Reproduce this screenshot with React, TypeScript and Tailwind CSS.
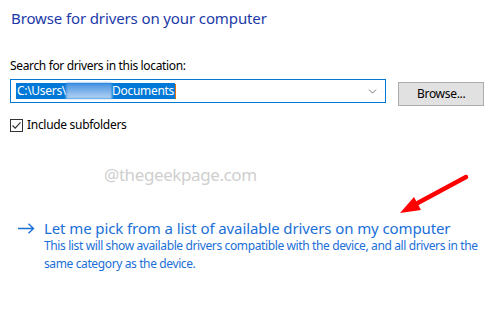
import { ChevronDown } from "lucide-react";

const FONT = "font-['Noto_Sans','Open_Sans',sans-serif]";

function RedArrow() {
  // hand-drawn style annotation pointing at the link
  return (
    <svg
      className="absolute left-0 top-0 pointer-events-none"
      width={494}
      height={319}
      viewBox="0 0 494 319"
    >
      <line x1={466} y1={177} x2={414} y2={205} stroke="#ff0000" strokeWidth={4.5} strokeLinecap="round" />
      <polygon points="400,213 414,197 421,210" fill="#ff0000" />
    </svg>
  );
}

export default function App() {
  return (
    <div className={`relative w-[494px] h-[319px] bg-white overflow-hidden ${FONT}`}>
      {/* Heading */}
      <h1 className="pt-[8px] pl-[11px] text-[15px] leading-[20px] tracking-[-0.12px] text-[#1c3aa8]">
        Browse for drivers on your computer
      </h1>

      <div className="px-[10px]">
        <p className="mt-[30px] text-[12px] leading-[16px] tracking-[-0.35px] text-black">
          Search for drivers in this location:
        </p>

        {/* Path combo + browse */}
        <div className="mt-[5px] flex items-start">
          <div className="w-[378px] h-[24px] border border-[#0078d7] flex items-center pl-[5px] pr-[6px]">
            <div className="flex items-center h-[16px] bg-[#0078d7] text-white text-[12px] leading-[16px] tracking-[-0.3px]">
              <span className="pl-[1px]">C:\Users\</span>
              <span className="w-[46px] h-[16px] bg-gradient-to-b from-[#3e8fe0] to-[#b9d6f3] blur-[1px]" />
              <span className="pr-[1px]">Documents</span>
            </div>
            <span className="w-px h-[15px] bg-[#e07000]" />
            <ChevronDown className="ml-auto text-[#555]" size={13} strokeWidth={1.5} />
          </div>
          <button className="ml-[12px] mt-[3px] w-[86px] h-[24px] bg-[#e1e1e1] border border-[#adadad] text-[12px] tracking-[-0.3px] text-black">
            Browse...
          </button>
        </div>

        {/* Include subfolders */}
        <label className="mt-[11px] flex items-center gap-[4px] text-[12px] leading-[16px] tracking-[-0.3px] text-black">
          <span className="w-[13px] h-[13px] border border-[#333] bg-white flex items-center justify-center">
            <svg width={11} height={11} viewBox="0 0 11 11">
              <path d="M1.5 5.5 L4.2 8.2 L9.5 2.3" fill="none" stroke="#333" strokeWidth={1.2} />
            </svg>
          </span>
          Include subfolders
        </label>
      </div>

      {/* watermark */}
      <span className="absolute left-[104px] top-[163px] text-[17px] leading-[24px] tracking-[-0.4px] text-[#cfcfcf]">
        @thegeekpage.com
      </span>

      {/* Link option */}
      <div className="mt-[86px] pl-[18px] flex items-start">
        <svg className="mt-[4px] shrink-0" width={17} height={11} viewBox="0 0 17 11">
          <path d="M0 5.5 H15.5 M10.5 0.7 L15.5 5.5 L10.5 10.3" fill="none" stroke="#1a6fd8" strokeWidth={1.4} />
        </svg>
        <div className="ml-[9px]">
          <p className="text-[15px] leading-[18px] tracking-[-0.1px] text-[#1a6fd8]">
            Let me pick from a list of available drivers on my computer
          </p>
          <p className="w-[448px] text-[12px] leading-[18px] tracking-[-0.38px] text-[#1a6fd8]">
            This list will show available drivers compatible with the device, and all drivers in the same category as the device.
          </p>
        </div>
      </div>

      <RedArrow />
    </div>
  );
}
